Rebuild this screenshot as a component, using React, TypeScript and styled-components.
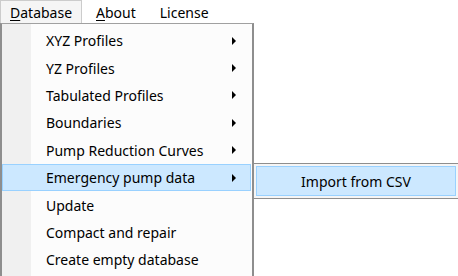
import React from "react";
import styled, { createGlobalStyle } from "styled-components";

const Global = createGlobalStyle`
  html, body { margin: 0; padding: 0; background: #ffffff; }
  body { font-family: "Noto Sans", "Open Sans", sans-serif; }
`;

const Screen = styled.div`
  position: relative;
  width: 458px;
  height: 276px;
  overflow: hidden;
  background: #ffffff;
  color: #000000;
`;

const MenuBar = styled.div`
  display: flex;
  align-items: stretch;
  height: 23px;
  background: #ffffff;
  font-size: 14px;
`;

const BarItem = styled.div<{ open?: boolean }>`
  display: flex;
  align-items: center;
  padding: 0 9px 0 ${(p) => (p.open ? "9px" : "13px")};
  box-sizing: border-box;
  background: ${(p) => (p.open ? "#f5f5f5" : "transparent")};
  border: 1px solid ${(p) => (p.open ? "#cccccc" : "transparent")};
  border-bottom: none;
  width: ${(p) => (p.open ? "82px" : "auto")};
`;

const Key = styled.span`
  text-decoration: underline;
  text-underline-offset: 2px;
`;

const Dropdown = styled.div`
  position: absolute;
  left: 0;
  top: 23px;
  width: 254px;
  height: 260px;
  box-sizing: border-box;
  background: #fcfcfc;
  border-left: 2px solid #8e8e8e;
  border-top: 1px solid #a0a0a0;
  border-right: 2px solid #8e8e8e;
  padding: 3px 0 0 0;
  font-size: 14px;
  &::before {
    content: "";
    position: absolute;
    left: 0;
    top: 0;
    bottom: 0;
    width: 29px;
    background: #f0f0f0;
  }
`;

const Item = styled.div<{ active?: boolean }>`
  position: relative;
  display: flex;
  align-items: center;
  height: 27.4px;
  box-sizing: border-box;
  padding-left: 43px;
  padding-right: 14px;
  margin-right: 1px;
  background: ${(p) => (p.active ? "#cce8ff" : "transparent")};
  border: 1px solid ${(p) => (p.active ? "#99d1ff" : "transparent")};
`;

const Label = styled.span`
  flex: 1;
  white-space: nowrap;
`;

const Arrow = styled.span`
  width: 0;
  height: 0;
  border-top: 4px solid transparent;
  border-bottom: 4px solid transparent;
  border-left: 4px solid #000000;
`;

const SubMenu = styled.div`
  position: absolute;
  left: 253px;
  top: 163px;
  width: 210px;
  height: 36px;
  box-sizing: border-box;
  background: #f5f5f5;
  border-left: 1px solid #8e8e8e;
  border-top: 1px solid #8e8e8e;
  border-bottom: 1px solid #8e8e8e;
  padding: 2px 3px 2px 2px;
  font-size: 14px;
`;

const SubItem = styled.div`
  display: flex;
  align-items: center;
  justify-content: center;
  height: 100%;
  width: 200px;
  box-sizing: border-box;
  background: #cce8ff;
  border: 1px solid #99d1ff;
`;

const items = [
  { label: "XYZ Profiles", sub: true },
  { label: "YZ Profiles", sub: true },
  { label: "Tabulated Profiles", sub: true },
  { label: "Boundaries", sub: true },
  { label: "Pump Reduction Curves", sub: true },
  { label: "Emergency pump data", sub: true, active: true },
  { label: "Update" },
  { label: "Compact and repair" },
  { label: "Create empty database" },
];

export default function App() {
  return (
    <Screen>
      <Global />
      <MenuBar>
        <BarItem open>
          <Key>D</Key>atabase
        </BarItem>
        <BarItem>
          <Key>A</Key>bout
        </BarItem>
        <BarItem>License</BarItem>
      </MenuBar>
      <Dropdown>
        {items.map((it) => (
          <Item key={it.label} active={it.active}>
            <Label>{it.label}</Label>
            {it.sub && <Arrow />}
          </Item>
        ))}
      </Dropdown>
      <SubMenu>
        <SubItem>Import from CSV</SubItem>
      </SubMenu>
    </Screen>
  );
}
